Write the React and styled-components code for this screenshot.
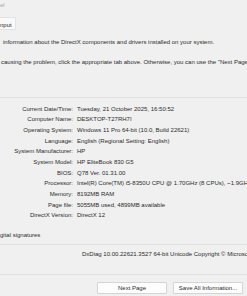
import React from "react";
import styled, { createGlobalStyle } from "styled-components";

const GlobalStyle = createGlobalStyle`
  html, body {
    margin: 0;
    padding: 0;
    background: #f0f0f0;
  }
`;

const Window = styled.div`
  width: 247px;
  height: 296px;
  overflow: hidden;
  background: #f0f0f0;
  color: #2b2b2b;
  font-family: "Liberation Sans", Arial, sans-serif;
  font-size: 6px;
  white-space: nowrap;
  display: flex;
  flex-direction: column;
`;

const Faint = styled.div`
  height: 10px;
  line-height: 10px;
  color: #a8a8a8;
`;

const TabStrip = styled.div`
  display: flex;
  margin-top: 7px;
`;

const Tab = styled.div`
  box-sizing: border-box;
  width: 16px;
  height: 13px;
  padding-top: 2px;
  line-height: 10px;
  background: #f9f9f9;
  border: 1px solid #e2e2e2;
  border-left: none;
`;

const Line = styled.div`
  height: 10px;
  line-height: 10px;
  margin-top: ${(p) => p.$top || 0}px;
  padding-left: ${(p) => p.$indent || 0}px;
`;

const Divider = styled.div`
  height: 1px;
  background: #e0e0e0;
  margin-top: ${(p) => p.$top || 0}px;
  flex-shrink: 0;
`;

const InfoGrid = styled.div`
  display: grid;
  grid-template-columns: 73px 1fr;
  column-gap: 4px;
  margin-top: 5.6px;
`;

const Label = styled.div`
  text-align: right;
  line-height: 10.7px;
  height: 10.7px;
`;

const Value = styled.div`
  line-height: 10.7px;
  height: 10.7px;
`;

const ButtonRow = styled.div`
  display: flex;
  justify-content: flex-end;
  gap: 6px;
  margin-top: 7px;
  padding-right: 4px;
`;

const Button = styled.div`
  box-sizing: border-box;
  width: 70px;
  height: 12px;
  line-height: 10px;
  text-align: center;
  background: #fdfdfd;
  border: 1px solid #d4d4d4;
  border-radius: 1px;
`;

const rows = [
  ["Current Date/Time:", "Tuesday, 21 October 2025, 16:50:52"],
  ["Computer Name:", "DESKTOP-T27RH7I"],
  ["Operating System:", "Windows 11 Pro 64-bit (10.0, Build 22621)"],
  ["Language:", "English (Regional Setting: English)"],
  ["System Manufacturer:", "HP"],
  ["System Model:", "HP EliteBook 830 G5"],
  ["BIOS:", "Q78 Ver. 01.31.00"],
  ["Processor:", "Intel(R) Core(TM) i5-8350U CPU @ 1.70GHz (8 CPUs), ~1.9GHz"],
  ["Memory:", "8192MB RAM"],
  ["Page file:", "5055MB used, 4899MB available"],
  ["DirectX Version:", "DirectX 12"],
];

export default function App() {
  return (
    <>
      <GlobalStyle />
      <Window>
        <Faint>el</Faint>
        <TabStrip>
          <Tab>nput</Tab>
        </TabStrip>
        <Line $top={7} $indent={3}>
          information about the DirectX components and drivers installed on your system.
        </Line>
        <Line $top={10} $indent={1}>
          causing the problem, click the appropriate tab above. Otherwise, you can use the "Next Page"
        </Line>
        <Divider $top={30} />
        <InfoGrid>
          {rows.map(([label, value]) => (
            <React.Fragment key={label}>
              <Label>{label}</Label>
              <Value>{value}</Value>
            </React.Fragment>
          ))}
        </InfoGrid>
        <Line $top={8.6}>gital signatures</Line>
        <Divider $top={4} />
        <Line $top={4} $indent={82}>
          DxDiag 10.00.22621.3527 64-bit Unicode  Copyright © Microsoft
        </Line>
        <Divider $top={15} />
        <ButtonRow>
          <Button>Next Page</Button>
          <Button>Save All Information...</Button>
        </ButtonRow>
      </Window>
    </>
  );
}
